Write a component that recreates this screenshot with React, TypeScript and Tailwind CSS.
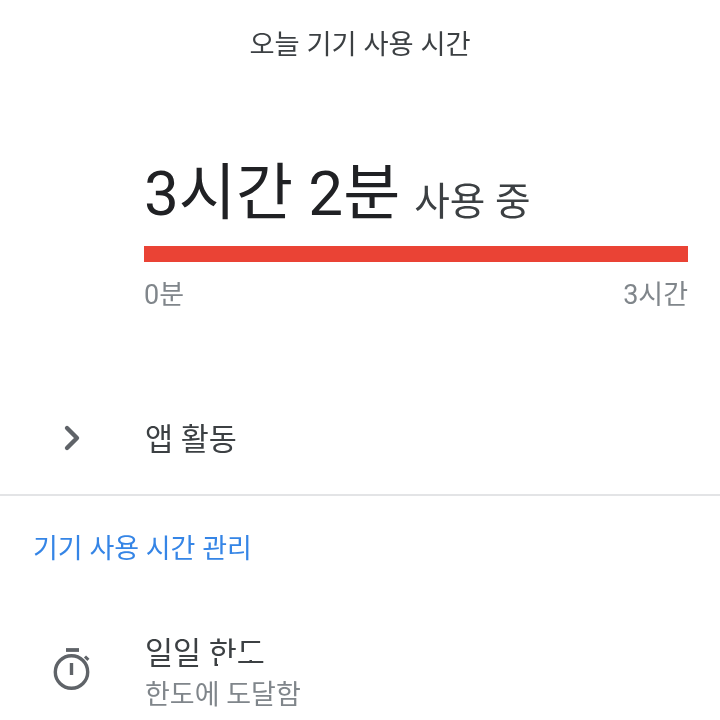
import { ChevronRight } from 'lucide-react'

const font = { fontFamily: 'Roboto, "Noto Sans CJK KR", sans-serif' }

const TimerIcon = () => (
  <svg width="44" height="44" viewBox="0 0 44 44" fill="none" stroke="#5f6368" strokeWidth="3.4">
    <path d="M16 3h13" strokeWidth="3.8" />
    <circle cx="21.5" cy="25" r="16.2" />
    <path d="M21.5 16v12" />
    <path d="M35 9.5l3.4 3.4" strokeWidth="3" />
  </svg>
)

export default function App() {
  return (
    <div style={font} className="w-[720px] h-[720px] overflow-hidden bg-white flex flex-col blur-[0.7px]">
      <div className="h-[87px] pt-[3px] flex items-center justify-center text-[27.3px] text-[#3c4043]">
        오늘 기기 사용 시간
      </div>

      <div className="pl-[144px] pr-[32px] pt-[60px]">
        <div className="flex items-baseline gap-[14px] h-[88px] pt-[5px] text-[#202124]">
          <span className="text-[62px] leading-[84px]">3시간 2분</span>
          <span className="text-[38.7px] text-[#3c4043]">사용 중</span>
        </div>
        <div className="h-[16px] mt-[11px] bg-[#ea4335]" />
        <div className="flex justify-between mt-[15px] mb-[-2px] text-[27px] leading-[36px] text-[#80868b]">
          <span>0분</span>
          <span>3시간</span>
        </div>
      </div>

      <div className="flex items-center h-[60px] mt-[97px]">
        <div className="w-[145px] pl-[52px]">
          <ChevronRight size={40} color="#5f6368" strokeWidth={2.6} />
        </div>
        <span className="text-[30.5px] pt-[3px] text-[#3c4043]">앱 활동</span>
      </div>

      <div className="h-[2px] mt-[26px] bg-[#e3e4e6]" />

      <div className="pl-[33px] mt-[33px] mb-[-1px] text-[27px] leading-[40px] text-[#3585e6]">기기 사용 시간 관리</div>

      <div className="flex mt-[61px]">
        <div className="w-[145px] pl-[50px] pt-[18px]">
          <TimerIcon />
        </div>
        <div className="flex flex-col pt-[3px]">
          <span className="relative text-[30.5px] leading-[44px] text-[#3c4043]">
            일일 한도
            <span className="absolute left-[73px] top-[26px] w-[18px] h-[12px] bg-white" />
            <span className="absolute left-[93px] top-[20px] w-[24px] h-[8px] bg-white" />
          </span>
          <span className="text-[27px] leading-[38px] text-[#80868b]">한도에 도달함</span>
        </div>
      </div>
    </div>
  )
}
